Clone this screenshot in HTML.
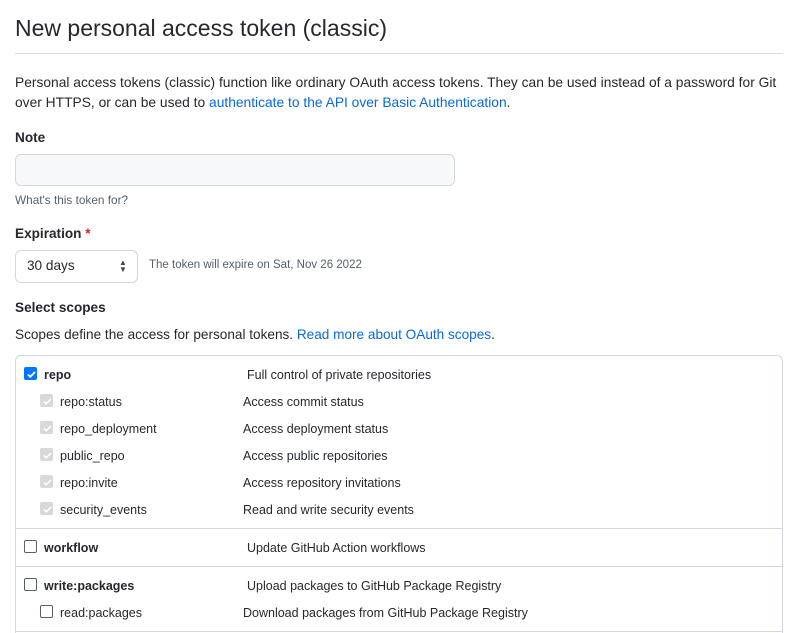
<!DOCTYPE html>
<html style="width:794px;height:633px;overflow:hidden"><head><meta charset="utf-8"><style>
*{box-sizing:border-box;margin:0;padding:0}
body{width:794px;height:633px;overflow:hidden;background:#fff;font-family:"Liberation Sans",sans-serif;color:#24292f;position:relative;font-size:14px}
.a{position:absolute;white-space:nowrap}
a{color:#0969da;text-decoration:none}
.cb{position:absolute;width:13px;height:13px;border:1px solid #57606a;border-radius:2px;background:#fff}
.on{background:#0075ff;border-color:#0075ff}
.dis{background:#d9d9d9;border-color:#d9d9d9}
.cb svg{position:absolute;left:1px;top:1px}
.s{font-size:12.5px}
</style></head><body>
<div class="a" style="left:15px;top:15px;font-size:23px">New personal access token (classic)</div>
<div class="a" style="left:15px;top:53px;width:768px;height:1px;background:#d8dee4"></div>
<div class="a" style="left:15px;top:73px;font-size:13.8px;line-height:20px">Personal access tokens (classic) function like ordinary OAuth access tokens. They can be used instead of a password for Git<br>over HTTPS, or can be used to <a>authenticate to the API over Basic Authentication</a>.</div>
<div class="a" style="left:15px;top:130px;font-weight:bold;font-size:13.6px">Note</div>
<div class="a" style="left:15px;top:154px;width:440px;height:32px;border:1px solid #d0d7de;border-radius:6px;background:#f6f8fa"></div>
<div class="a" style="left:15px;top:193px;font-size:11.8px;color:#57606a">What's this token for?</div>
<div class="a" style="left:15px;top:226px;font-weight:bold;font-size:13.6px">Expiration <span style="color:#cf222e">*</span></div>
<div class="a" style="left:15px;top:250px;width:123px;height:33px;border:1px solid #d0d7de;border-radius:6px"></div>
<div class="a" style="left:27px;top:258px;font-size:13.6px">30 days</div>
<div class="a" style="left:119px;top:259px;font-size:8px;line-height:7px;color:#444">▲<br>▼</div>
<div class="a" style="left:149px;top:259px;font-size:11.5px;color:#57606a">The token will expire on Sat, Nov 26 2022</div>
<div class="a" style="left:15px;top:300px;font-weight:bold;font-size:13.6px">Select scopes</div>
<div class="a" style="left:15px;top:327px;font-size:13.6px">Scopes define the access for personal tokens. <a>Read more about OAuth scopes</a>.</div>
<div class="a" style="left:15px;top:355px;width:768px;height:300px;border:1px solid #d0d7de;border-radius:6px"></div>
<div class="a" style="left:15px;top:528px;width:768px;height:1px;background:#d0d7de"></div>
<div class="a" style="left:15px;top:566px;width:768px;height:1px;background:#d0d7de"></div>
<div class="a" style="left:15px;top:631px;width:768px;height:1px;background:#d0d7de"></div>

<div class="cb on" style="left:24px;top:367px"><svg width="11" height="11" viewBox="0 0 11 11"><path d="M2 5.5l2.3 2.3L9 3" stroke="#fff" stroke-width="1.8" fill="none"/></svg></div>
<div class="a s" style="left:44px;top:368px;font-weight:bold">repo</div>
<div class="a s" style="left:247px;top:368px">Full control of private repositories</div>

<div class="cb dis" style="left:40px;top:394px"><svg width="11" height="11" viewBox="0 0 11 11"><path d="M2 5.5l2.3 2.3L9 3" stroke="#fff" stroke-width="1.6" fill="none"/></svg></div>
<div class="a s" style="left:60px;top:395px">repo:status</div><div class="a s" style="left:243px;top:395px">Access commit status</div>
<div class="cb dis" style="left:40px;top:421px"><svg width="11" height="11" viewBox="0 0 11 11"><path d="M2 5.5l2.3 2.3L9 3" stroke="#fff" stroke-width="1.6" fill="none"/></svg></div>
<div class="a s" style="left:60px;top:422px">repo_deployment</div><div class="a s" style="left:243px;top:422px">Access deployment status</div>
<div class="cb dis" style="left:40px;top:448px"><svg width="11" height="11" viewBox="0 0 11 11"><path d="M2 5.5l2.3 2.3L9 3" stroke="#fff" stroke-width="1.6" fill="none"/></svg></div>
<div class="a s" style="left:60px;top:449px">public_repo</div><div class="a s" style="left:243px;top:449px">Access public repositories</div>
<div class="cb dis" style="left:40px;top:475px"><svg width="11" height="11" viewBox="0 0 11 11"><path d="M2 5.5l2.3 2.3L9 3" stroke="#fff" stroke-width="1.6" fill="none"/></svg></div>
<div class="a s" style="left:60px;top:476px">repo:invite</div><div class="a s" style="left:243px;top:476px">Access repository invitations</div>
<div class="cb dis" style="left:40px;top:502px"><svg width="11" height="11" viewBox="0 0 11 11"><path d="M2 5.5l2.3 2.3L9 3" stroke="#fff" stroke-width="1.6" fill="none"/></svg></div>
<div class="a s" style="left:60px;top:503px">security_events</div><div class="a s" style="left:243px;top:503px">Read and write security events</div>

<div class="cb" style="left:24px;top:540px"></div>
<div class="a s" style="left:44px;top:541px;font-weight:bold">workflow</div><div class="a s" style="left:247px;top:541px">Update GitHub Action workflows</div>
<div class="cb" style="left:24px;top:578px"></div>
<div class="a s" style="left:44px;top:579px;font-weight:bold">write:packages</div><div class="a s" style="left:247px;top:579px">Upload packages to GitHub Package Registry</div>
<div class="cb" style="left:40px;top:605px"></div>
<div class="a s" style="left:60px;top:606px">read:packages</div><div class="a s" style="left:243px;top:606px">Download packages from GitHub Package Registry</div>
</body></html>
